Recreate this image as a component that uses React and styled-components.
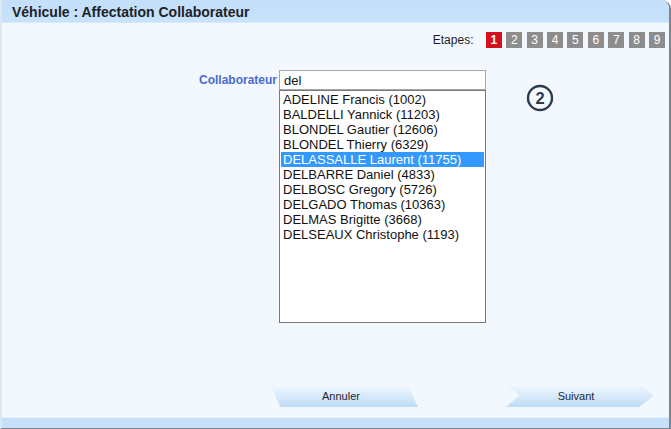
import React from "react"
import styled, { createGlobalStyle } from "styled-components"

const Global = createGlobalStyle`
  html, body { margin: 0; padding: 0; background: #ffffff; }
  body { font-family: "Liberation Sans", Arial, sans-serif; }
`

const people = [
  "ADELINE Francis (1002)",
  "BALDELLI Yannick (11203)",
  "BLONDEL Gautier (12606)",
  "BLONDEL Thierry (6329)",
  "DELASSALLE Laurent (11755)",
  "DELBARRE Daniel (4833)",
  "DELBOSC Gregory (5726)",
  "DELGADO Thomas (10363)",
  "DELMAS Brigitte (3668)",
  "DELSEAUX Christophe (1193)",
]

const App = () => {
  return (
    <>
      <Global />
      <Window>
        <Header>Véhicule : Affectation Collaborateur</Header>
        <Body>
          <Steps>
            <StepsLabel>Etapes:</StepsLabel>
            {[1, 2, 3, 4, 5, 6, 7, 8, 9].map((n) => (
              <Step key={n} active={n === 1}>{n}</Step>
            ))}
          </Steps>
          <FormRow>
            <Label>Collaborateur</Label>
            <Field>
              <Input>del</Input>
              <List>
                {people.map((p, i) => (
                  <Item key={p} selected={i === 4}>{p}</Item>
                ))}
              </List>
            </Field>
            <StepIcon width="28" height="28" viewBox="0 0 28 28">
              <circle cx="14" cy="14" r="12" fill="none" stroke="#2b3a4c" strokeWidth="2.4" />
              <text x="14" y="19.8" textAnchor="middle" fontSize="16.5" fontWeight="bold" fontFamily="Liberation Sans, Arial, sans-serif" fill="#2b3a4c">2</text>
            </StepIcon>
          </FormRow>
          <Buttons>
            <CancelButton>Annuler</CancelButton>
            <NextButton>Suivant</NextButton>
          </Buttons>
        </Body>
        <Footer />
      </Window>
    </>
  )
}

export default App

const Window = styled.div`
  width: 671px;
  height: 429px;
  box-sizing: border-box;
  display: flex;
  flex-direction: column;
  background: #f2f8fe;
  border-right: 2px solid #7d8590;
  border-bottom: 1px solid #7d8590;
  border-left: 2px solid #dce8f4;
  border-top-right-radius: 9px;
  overflow: hidden;
`

const Header = styled.div`
  height: 23px;
  flex: none;
  box-sizing: border-box;
  padding: 4px 0 0 10px;
  background: linear-gradient(#c3dff9, #c7e2fb);
  border-bottom: 1px solid #d8e9fb;
  font-size: 14px;
  font-weight: bold;
  color: #1e2226;
`

const Body = styled.div`
  flex: 1;
  display: flex;
  flex-direction: column;
  padding: 9px 0 0 0;
`

const Steps = styled.div`
  display: flex;
  justify-content: flex-end;
  align-items: center;
  gap: 4.4px;
  padding-right: 4px;
  height: 16px;
`

const StepsLabel = styled.span`
  font-size: 12px;
  color: #1d1d1d;
  margin-right: 8px;
`

const Step = styled.span`
  width: 16px;
  height: 16px;
  display: flex;
  align-items: center;
  justify-content: center;
  background: ${(p) => (p.active ? "#d4101c" : "#8d8d8d")};
  color: #ffffff;
  font-size: 12px;
  font-weight: ${(p) => (p.active ? "bold" : "normal")};
`

const FormRow = styled.div`
  display: flex;
  align-items: flex-start;
  margin-top: 22px;
  padding-left: 194px;
`

const Label = styled.div`
  width: 81px;
  text-align: right;
  padding-top: 3px;
  font-size: 12px;
  font-weight: bold;
  color: #4a6bd0;
  margin-right: 2px;
`

const Field = styled.div`
  display: flex;
  flex-direction: column;
  width: 207px;
`

const Input = styled.div`
  height: 20px;
  box-sizing: border-box;
  border: 1px solid #a6a6a6;
  background: #ffffff;
  padding: 2px 4px;
  font-size: 13px;
  color: #111;
`

const List = styled.div`
  height: 233px;
  box-sizing: border-box;
  border: 1px solid #7a7a7a;
  background: #ffffff;
  padding: 1px 1px;
`

const Item = styled.div`
  height: 15px;
  line-height: 15px;
  padding-left: 2px;
  font-size: 13px;
  white-space: nowrap;
  color: ${(p) => (p.selected ? "#ffffff" : "#111111")};
  background: ${(p) => (p.selected ? "#3399ff" : "transparent")};
`

const StepIcon = styled.svg`
  margin-left: 40px;
  margin-top: 14px;
  flex: none;
`

const Buttons = styled.div`
  margin-top: auto;
  margin-bottom: 10px;
  display: flex;
  padding-left: 268px;
  gap: 88px;
`

const BaseButton = styled.div`
  height: 23px;
  width: 148px;
  box-sizing: border-box;
  display: flex;
  align-items: center;
  justify-content: center;
  font-size: 11px;
  color: #1d2733;
  background: linear-gradient(#f2f8fe 0%, #dcecfb 45%, #bddbf6 100%);
`

const CancelButton = styled(BaseButton)`
  clip-path: polygon(0 0, 93% 0, 100% 100%, 7% 100%);
  padding-right: 6px;
`

const NextButton = styled(BaseButton)`
  clip-path: polygon(0 0, 90% 0, 100% 50%, 90% 100%, 0 100%, 9% 50%);
  padding-right: 8px;
`

const Footer = styled.div`
  height: 10px;
  flex: none;
  background: #c6e0f9;
  border-top: 1px solid #e4f0fc;
`
